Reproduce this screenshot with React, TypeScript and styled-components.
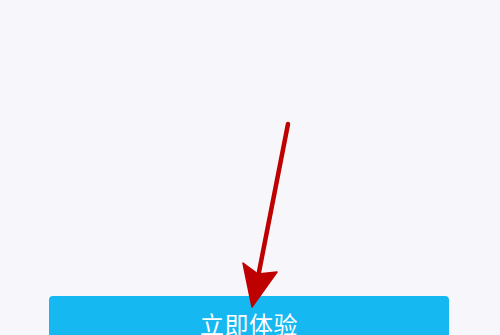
import React from 'react';
import styled, { createGlobalStyle } from 'styled-components';

const GlobalStyle = createGlobalStyle`
  html, body {
    margin: 0;
    padding: 0;
    height: 100%;
    overflow: hidden;
    background-color: #f7f7fb;
  }
  #root {
    height: 100%;
  }
`;

const Page = styled.div`
  position: relative;
  height: 100vh;
  display: flex;
  flex-direction: column;
  padding: 0 51px 0 49px;
  box-sizing: border-box;
  background-color: #f7f7fb;
  font-family: 'Noto Sans CJK SC', 'Noto Sans', sans-serif;
`;

const Content = styled.div`
  flex: 0 0 296px;
`;

const StartButton = styled.button`
  flex: 0 0 54px;
  border: none;
  border-radius: 4px;
  background-color: #15b8f1;
  color: #ffffff;
  font-family: inherit;
  font-size: 24px;
  font-weight: 400;
  letter-spacing: 0.5px;
  padding: 0;
  cursor: pointer;
`;

const ArrowLayer = styled.svg`
  position: absolute;
  left: 0;
  top: 0;
  width: 500px;
  height: 335px;
  pointer-events: none;
`;

const Arrow = () => (
  <ArrowLayer viewBox="0 0 500 335">
    <line
      x1="288"
      y1="124"
      x2="259"
      y2="272"
      stroke="#bf0000"
      strokeWidth="4.5"
      strokeLinecap="round"
    />
    <path
      d="M243 263 L258 274 L277 272 L252 307 Z"
      fill="#bf0000"
      stroke="#bf0000"
      strokeWidth="1.5"
      strokeLinejoin="round"
    />
  </ArrowLayer>
);

const App: React.FC = () => {
  return (
    <>
      <GlobalStyle />
      <Page>
        <Content />
        <StartButton>立即体验</StartButton>
        <Arrow />
      </Page>
    </>
  );
};

export default App;
